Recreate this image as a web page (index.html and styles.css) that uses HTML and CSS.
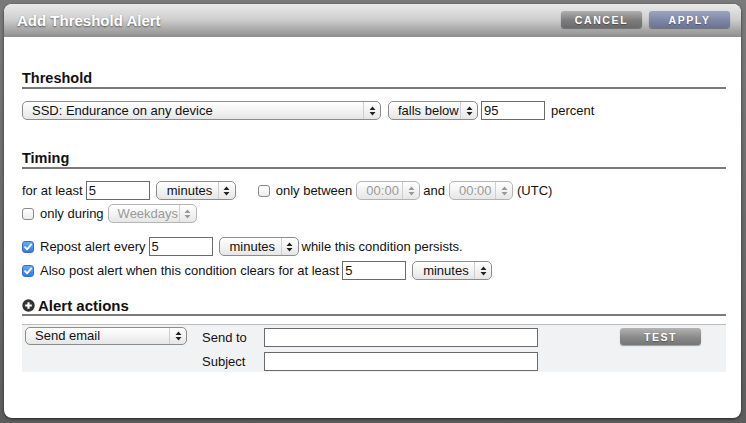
FILE: index.html
```html
<!DOCTYPE html>
<html>
<head>
<meta charset="utf-8">
<link rel="stylesheet" href="styles.css">
</head>
<body>
<div class="dialog">
  <div class="header">
    <div class="title">Add Threshold Alert</div>
    <div class="hbtns">
      <span class="btn btn-cancel">CANCEL</span>
      <span class="btn btn-apply">APPLY</span>
    </div>
  </div>
  <div class="content">
    <h2 class="section first">Threshold</h2>
    <div class="row r0">
      <span class="sel sel-metric"><span class="sel-text">SSD: Endurance on any device</span><span class="sel-arr"><svg width="7" height="10" viewBox="0 0 7 10"><path d="M3.5 0.5L6.5 4H0.5Z M3.5 9.5L6.5 6H0.5Z" fill="#222"/></svg></span></span>
      <span class="sel sel-op gap7"><span class="sel-text">falls below</span><span class="sel-arr"><svg width="7" height="10" viewBox="0 0 7 10"><path d="M3.5 0.5L6.5 4H0.5Z M3.5 9.5L6.5 6H0.5Z" fill="#222"/></svg></span></span>
      <input class="txt gap3" type="text" value="95">
      <span class="lbl gap6">percent</span>
    </div>

    <h2 class="section timing">Timing</h2>
    <div class="row r1">
      <span class="lbl">for at least</span>
      <input class="txt gap3" type="text" value="5">
      <span class="sel sel-unit gap6"><span class="sel-text">minutes</span><span class="sel-arr"><svg width="7" height="10" viewBox="0 0 7 10"><path d="M3.5 0.5L6.5 4H0.5Z M3.5 9.5L6.5 6H0.5Z" fill="#222"/></svg></span></span>
      <span class="cb gap22"></span>
      <span class="lbl gap6">only between</span>
      <span class="sel sel-time dis gap4"><span class="sel-text">00:00</span><span class="sel-arr"><svg width="7" height="10" viewBox="0 0 7 10"><path d="M3.5 0.5L6.5 4H0.5Z M3.5 9.5L6.5 6H0.5Z" fill="#999"/></svg></span></span>
      <span class="lbl gap3">and</span>
      <span class="sel sel-time dis gap4"><span class="sel-text">00:00</span><span class="sel-arr"><svg width="7" height="10" viewBox="0 0 7 10"><path d="M3.5 0.5L6.5 4H0.5Z M3.5 9.5L6.5 6H0.5Z" fill="#999"/></svg></span></span>
      <span class="lbl gap4">(UTC)</span>
    </div>
    <div class="row r2">
      <span class="cb"></span>
      <span class="lbl gap6">only during</span>
      <span class="sel sel-day dis gap4"><span class="sel-text">Weekdays</span><span class="sel-arr"><svg width="7" height="10" viewBox="0 0 7 10"><path d="M3.5 0.5L6.5 4H0.5Z M3.5 9.5L6.5 6H0.5Z" fill="#999"/></svg></span></span>
    </div>
    <div class="row r3">
      <span class="cb on"><svg width="12" height="12" viewBox="0 0 12 12"><path d="M3 6.2L5.1 8.4L9.2 3.4" fill="none" stroke="#fff" stroke-width="1.8" stroke-linecap="round" stroke-linejoin="round"/></svg></span>
      <span class="lbl gap6">Repost alert every</span>
      <input class="txt gap3" type="text" value="5">
      <span class="sel sel-unit gap6"><span class="sel-text">minutes</span><span class="sel-arr"><svg width="7" height="10" viewBox="0 0 7 10"><path d="M3.5 0.5L6.5 4H0.5Z M3.5 9.5L6.5 6H0.5Z" fill="#222"/></svg></span></span>
      <span class="lbl gap3">while this condition persists.</span>
    </div>
    <div class="row r4">
      <span class="cb on"><svg width="12" height="12" viewBox="0 0 12 12"><path d="M3 6.2L5.1 8.4L9.2 3.4" fill="none" stroke="#fff" stroke-width="1.8" stroke-linecap="round" stroke-linejoin="round"/></svg></span>
      <span class="lbl gap6">Also post alert when this condition clears for at least</span>
      <input class="txt gap3" type="text" value="5">
      <span class="sel sel-unit gap6"><span class="sel-text">minutes</span><span class="sel-arr"><svg width="7" height="10" viewBox="0 0 7 10"><path d="M3.5 0.5L6.5 4H0.5Z M3.5 9.5L6.5 6H0.5Z" fill="#222"/></svg></span></span>
    </div>

    <h2 class="section actions"><svg class="plus" width="13" height="13" viewBox="0 0 13 13"><circle cx="6.5" cy="6.5" r="6.2" fill="#333"/><path d="M6.5 3.2V9.8M3.2 6.5H9.8" stroke="#fff" stroke-width="2.2"/></svg>Alert actions</h2>
    <div class="abox">
      <span class="sel sel-action"><span class="sel-text">Send email</span><span class="sel-arr"><svg width="7" height="10" viewBox="0 0 7 10"><path d="M3.5 0.5L6.5 4H0.5Z M3.5 9.5L6.5 6H0.5Z" fill="#222"/></svg></span></span>
      <div class="afields">
        <span class="lbl">Send to</span><input class="txt wide" type="text">
        <span class="lbl">Subject</span><input class="txt wide" type="text">
      </div>
      <span class="btn btn-test">TEST</span>
    </div>
  </div>
</div>
</body>
</html>
```

FILE: styles.css
```css
* { box-sizing: border-box; }
html, body { margin: 0; padding: 0; }
body {
  width: 746px;
  height: 423px;
  background: linear-gradient(#7a7a7a, #5c5c5c);
  font-family: "Liberation Sans", Arial, sans-serif;
  font-size: 13px;
  color: #111;
  padding: 4px 5px 5px 4px;
  overflow: hidden;
}
.dialog {
  width: 737px;
  height: 414px;
  background: #fff;
  border-radius: 8px;
  overflow: hidden;
  box-shadow: 0 1px 3px rgba(0,0,0,0.6);
}
.header {
  height: 33px;
  background: linear-gradient(#e9e9e9 0%, #d0d0d0 45%, #8d8d8d 100%);
  display: flex;
  align-items: flex-start;
  justify-content: space-between;
  padding: 0 11px 0 13px;
}
.title {
  font-weight: bold;
  font-size: 15px;
  color: #fff;
  text-shadow: 0 1px 2px rgba(0,0,0,0.55);
  margin-top: 8px;
}
.hbtns { display: flex; gap: 7px; margin-top: 7px; }
.btn {
  display: inline-flex;
  align-items: center;
  justify-content: center;
  width: 81px;
  height: 17px;
  border-radius: 3px;
  color: #fff;
  font-weight: bold;
  font-size: 10.5px;
  letter-spacing: 1.6px;
  text-shadow: 0 1px 1px rgba(0,0,0,0.35);
  box-shadow: 0 1px 1px rgba(0,0,0,0.35);
}
.btn-cancel { background: linear-gradient(#b0b0b0, #7c7c7c 55%, #6a6a6a); }
.btn-apply { background: linear-gradient(#9ca5bf, #7d86a5 55%, #6a7393); }
.content { padding: 0 15px 0 18px; }
.section {
  margin: 0;
  font-size: 14.5px;
  font-weight: bold;
  line-height: 17px;
  border-bottom: 2px solid #7a7a7a;
  padding-bottom: 0;
  margin-bottom: 12px;
}
.section.first { margin-top: 33px; }
.section.timing { margin-top: 30px; }
.section.actions {
  display: flex;
  align-items: center;
  margin-top: 17px;
  margin-bottom: 8px;
  font-size: 15px;
}
.plus { margin-right: 3px; }
.row { display: flex; align-items: center; height: 19px; }
.r1 { margin-top: 12px; }
.r2 { margin-top: 4px; }
.r3 { margin-top: 14px; }
.r4 { margin-top: 5px; }
.lbl { white-space: nowrap; font-size: 13px; }
.gap3 { margin-left: 3px; }
.gap4 { margin-left: 4px; }
.gap6 { margin-left: 6px; }
.gap7 { margin-left: 7px; }
.gap22 { margin-left: 22px; }
.txt {
  width: 64px;
  height: 19px;
  border: 1px solid #6a6a6a;
  border-radius: 0;
  padding: 0 2px;
  font-family: "Liberation Sans", Arial, sans-serif;
  font-size: 13px;
  color: #111;
  background: #fff;
  outline: none;
}
.sel {
  display: inline-flex;
  align-items: stretch;
  height: 19px;
  border: 1px solid #8c8c8c;
  border-radius: 5px;
  background: linear-gradient(#ffffff, #f3f3f3 50%, #e6e6e6);
  font-size: 13px;
  color: #111;
}
.sel-text {
  flex: 1;
  padding-left: 9px;
  line-height: 17px;
  white-space: nowrap;
  overflow: hidden;
}
.sel-arr {
  width: 17px;
  border-left: 1px solid #cfcfcf;
  display: flex;
  align-items: center;
  justify-content: center;
}
.sel.dis { border-color: #b4b4b4; color: #9a9a9a; }
.sel-metric { width: 359px; }
.sel-op { width: 90px; }
.sel-unit { width: 80px; }
.sel-unit .sel-text { padding-left: 10px; }
.sel-time { width: 64px; }
.sel-day { width: 89px; }
.sel-action { width: 162px; height: 18px; }
.sel-action .sel-text { line-height: 16px; }
.cb {
  display: inline-flex;
  width: 12px;
  height: 12px;
  border: 1px solid #8a8a8a;
  border-radius: 3px;
  background: linear-gradient(#fff, #ececec);
}
.cb.on {
  border: 1px solid #2f6fd0;
  background: linear-gradient(#6aa8f4, #2f7ae6);
}
.cb.on svg { margin: -1px; }
.abox {
  display: flex;
  align-items: flex-start;
  background: #f1f2f3;
  border-top: 1px solid #bcbcbc;
  height: 48px;
  padding: 2px 0 0 3px;
}
.afields {
  display: grid;
  grid-template-columns: 62px 274px;
  row-gap: 5px;
  align-items: center;
  margin-left: 15px;
  margin-top: 1px;
}
.txt.wide { width: 274px; height: 19px; }
.btn-test {
  margin-left: 82px;
  margin-top: 1px;
  background: linear-gradient(#b4b4b4, #8a8a8a 55%, #767676);
}
```
